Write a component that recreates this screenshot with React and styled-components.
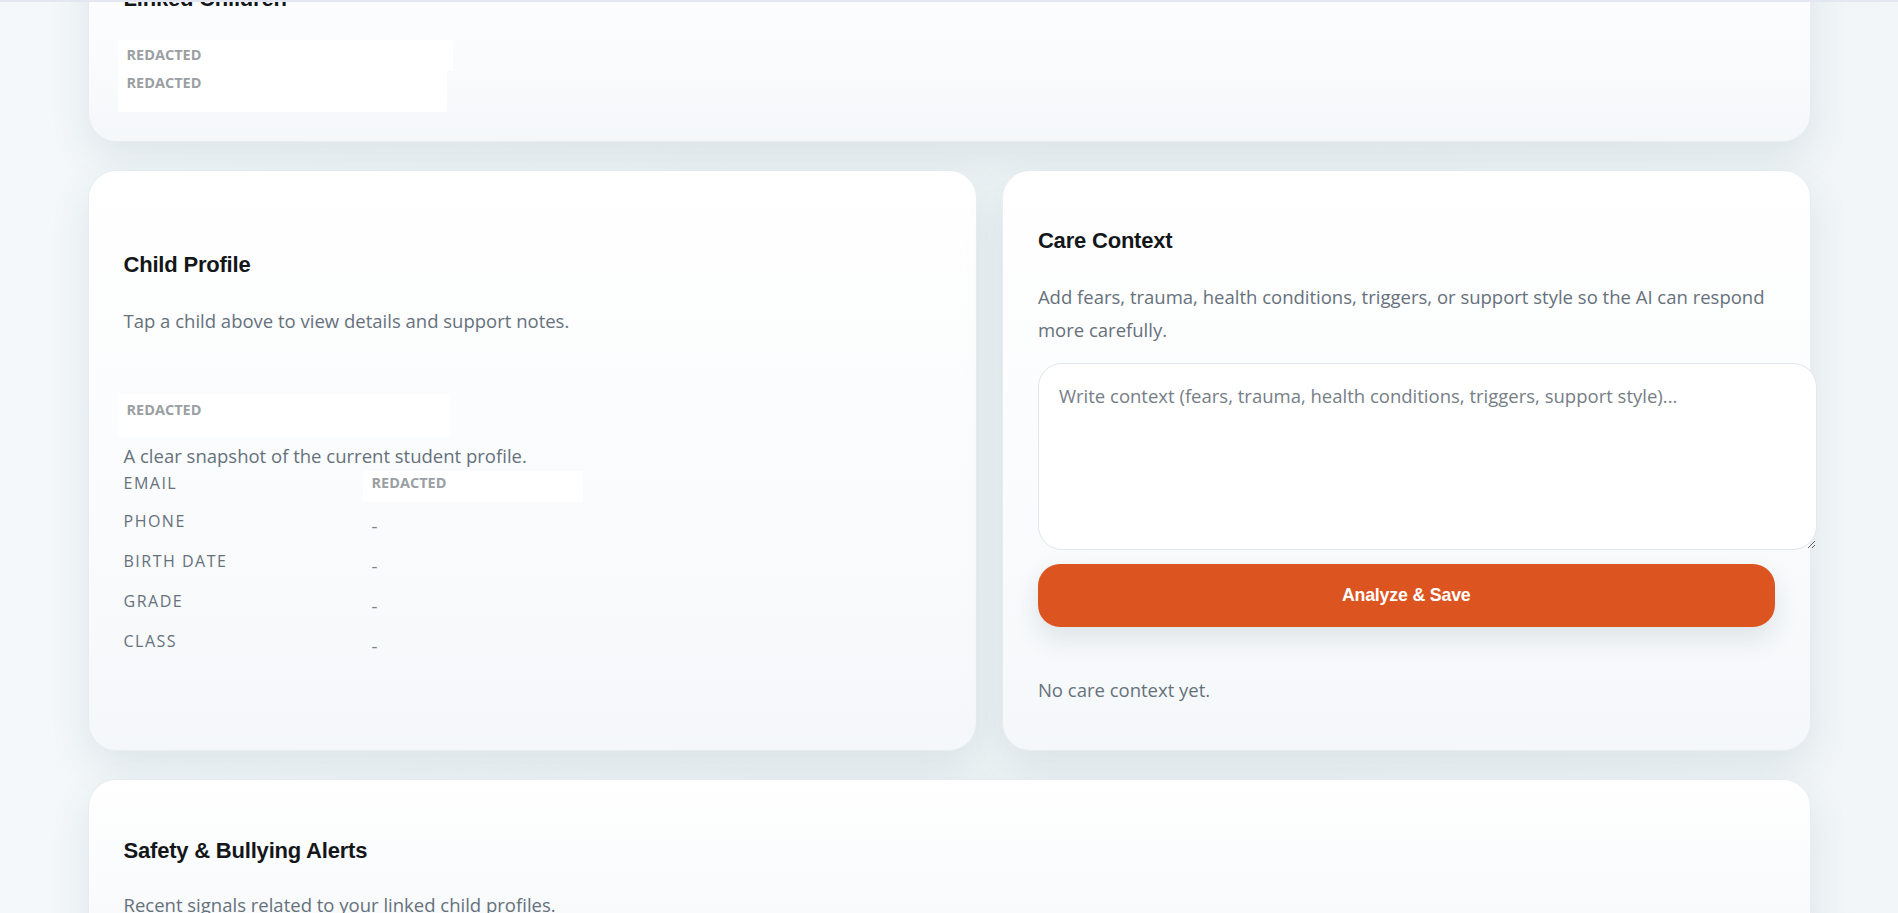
import styled, { createGlobalStyle } from 'styled-components';

const GlobalStyle = createGlobalStyle`
  html, body {
    margin: 0;
    padding: 0;
    overflow: hidden;
  }
  body {
    background: linear-gradient(90deg, #f4f8fa 0%, #eef4f6 40%, #eef4f6 70%, #f2f6f8 100%);
    font-family: "Open Sans", "Noto Sans", sans-serif;
    color: #1a1d21;
  }
  *, *::before, *::after {
    box-sizing: border-box;
  }
`;

const TopEdge = styled.div`
  position: fixed;
  top: 0;
  left: 0;
  right: 0;
  height: 2px;
  background: #e4e6f1;
  z-index: 5;
`;

const Page = styled.main`
  max-width: 1723px;
  margin: 0 auto;
  display: flex;
  flex-direction: column;
  gap: 28px;
  padding-bottom: 40px;
`;

const Card = styled.section`
  background: linear-gradient(180deg, #ffffff 0%, #fbfcfd 45%, #f5f8fa 100%);
  border: 1px solid rgba(222, 230, 236, 0.7);
  border-radius: 28px;
  box-shadow: 0 16px 40px rgba(40, 80, 100, 0.10);
  padding: ${(p) => p.$pad || '57px 35px 43px'};
  margin-top: ${(p) => p.$shift || '0'};
  display: flex;
  flex-direction: column;
`;

const Row = styled.div`
  display: grid;
  grid-template-columns: 1.1fr 1fr;
  gap: 25px;
`;

const Title = styled.h2`
  margin: 0 0 ${(p) => p.$after || '27px'};
  font-family: "Liberation Sans", Arial, sans-serif;
  font-size: 22px;
  line-height: 26px;
  font-weight: 700;
  letter-spacing: -0.2px;
  color: #14171a;
`;

const Text = styled.p`
  margin: 0;
  font-size: 18.5px;
  line-height: 32.5px;
  color: #66717b;
`;

const Redacted = styled.div`
  background: #ffffff;
  width: ${(p) => p.$w || '332px'};
  padding: ${(p) => p.$pad || '6px 9px'};
  margin-left: -6px;
  font-size: 14.5px;
  line-height: 18px;
  font-weight: 700;
  color: #9b9fa4;
`;

const RedactStack = styled.div`
  display: flex;
  flex-direction: column;
`;

const Snapshot = styled.div`
  margin-top: 56px;
  display: flex;
  flex-direction: column;
`;

const SnapshotNote = styled.p`
  margin: 7px 0 5px;
  font-size: 18.5px;
  line-height: 24px;
  color: #66717b;
`;

const Details = styled.dl`
  margin: 0;
  display: grid;
  grid-template-columns: 248px 1fr;
  row-gap: 15px;
  align-items: start;
`;

const Label = styled.dt`
  margin: 0;
  font-size: 16px;
  line-height: 20px;
  letter-spacing: 1.5px;
  text-transform: uppercase;
  color: #66717b;
`;

const Value = styled.dd`
  margin: 0;
  font-size: 18.5px;
  line-height: 20px;
  padding-top: 5px;
  color: #7a838c;
`;

const ValueRedacted = styled(Value)`
  margin: -2px 0 -6px -9px;
  width: 220px;
  background: #ffffff;
  padding: 3px 9px 10px;
  font-size: 14.5px;
  line-height: 18px;
  font-weight: 700;
  color: #9b9fa4;
`;

const ContextInput = styled.textarea`
  box-sizing: content-box;
  width: 100%;
  height: 145px;
  margin: 17px 0 0;
  padding: 20px;
  border: 1px solid #e1e7ec;
  border-radius: 24px;
  background: #ffffff;
  font-family: "Open Sans", "Noto Sans", sans-serif;
  font-size: 18.5px;
  line-height: 24px;
  color: #333;
  outline: none;

  &::placeholder {
    color: #767e86;
  }
`;

const PrimaryButton = styled.button`
  margin-top: 14px;
  width: 100%;
  height: 63px;
  border: none;
  border-radius: 22px;
  background: #dc5420;
  color: #ffffff;
  font-family: "Liberation Sans", Arial, sans-serif;
  font-size: 17.8px;
  font-weight: 700;
  letter-spacing: -0.2px;
  box-shadow: 0 12px 26px rgba(40, 70, 90, 0.12);
  cursor: pointer;
`;

const EmptyNote = styled(Text)`
  margin-top: 47px;
`;

const profileRows = [
  ['Phone', '-'],
  ['Birth Date', '-'],
  ['Grade', '-'],
  ['Class', '-'],
];

export default function App() {
  return (
    <>
      <GlobalStyle />
      <TopEdge />
      <Page>
        <Card $shift="-75px" $pad="60px 35px 29px">
          <Title $after="28px">Linked Children</Title>
          <RedactStack>
            <Redacted $w="335px" $pad="6px 9px 7px">REDACTED</Redacted>
            <Redacted $w="329px" $pad="3px 9px 20px">REDACTED</Redacted>
          </RedactStack>
        </Card>

        <Row>
          <Card $pad="81px 35px 43px">
            <Title>Child Profile</Title>
            <Text>Tap a child above to view details and support notes.</Text>
            <Snapshot>
              <Redacted $pad="7px 9px 18px">REDACTED</Redacted>
              <SnapshotNote>A clear snapshot of the current student profile.</SnapshotNote>
              <Details>
                <Label>Email</Label>
                <ValueRedacted>REDACTED</ValueRedacted>
                {profileRows.map(([label, value]) => (
                  <>
                    <Label key={label}>{label}</Label>
                    <Value key={label + '-v'}>{value}</Value>
                  </>
                ))}
              </Details>
            </Snapshot>
          </Card>

          <Card>
            <Title>Care Context</Title>
            <Text>
              Add fears, trauma, health conditions, triggers, or support style so the AI can respond more carefully.
            </Text>
            <ContextInput placeholder="Write context (fears, trauma, health conditions, triggers, support style)..." />
            <PrimaryButton>Analyze &amp; Save</PrimaryButton>
            <EmptyNote>No care context yet.</EmptyNote>
          </Card>
        </Row>

        <Card $pad="58px 35px 42px">
          <Title $after="25px">Safety &amp; Bullying Alerts</Title>
          <Text>Recent signals related to your linked child profiles.</Text>
        </Card>
      </Page>
    </>
  );
}
